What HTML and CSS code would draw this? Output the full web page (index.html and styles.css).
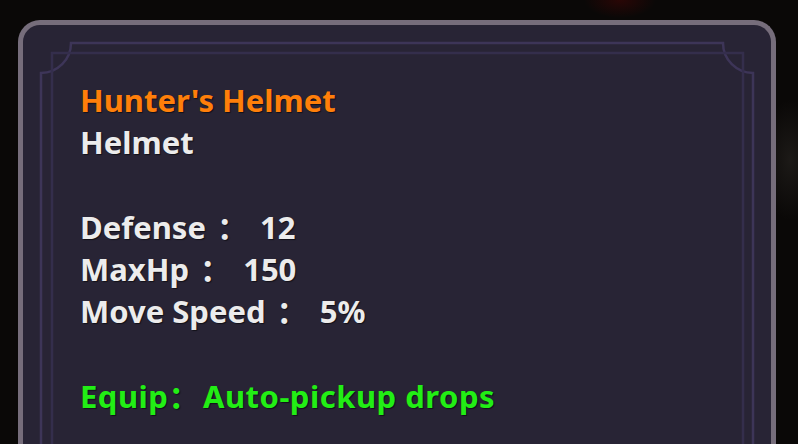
FILE: index.html
```html
<!DOCTYPE html>
<html lang="en">
<head>
    <meta charset="UTF-8">
    <title>Item Tooltip</title>
    <link rel="stylesheet" href="styles.css">
</head>
<body>
    <div class="tooltip">
        <svg class="frame" width="748" height="440" viewBox="0 0 748 440">
            <path class="frame-outer" d="M18 440 V48 A30 30 0 0 0 48 18 H700 A30 30 0 0 0 730 48 V440"/>
            <path class="frame-inner" d="M29 440 V28 H720 V440"/>
        </svg>

        <div class="content">
            <div class="line name">Hunter's Helmet</div>
            <div class="line">Helmet</div>
            <div class="line"></div>
            <div class="line stat">Defense <span class="colon">：</span>&nbsp;12</div>
            <div class="line stat">MaxHp <span class="colon">：</span>&nbsp;150</div>
            <div class="line stat">Move Speed <span class="colon">：</span>&nbsp;5%</div>
            <div class="line"></div>
            <div class="line equip">Equip<span class="colon">：</span>Auto-pickup drops</div>
        </div>
    </div>
</body>
</html>
```

FILE: styles.css
```css
:root {
    --page-bg: #0a0807;
    --card-bg: #282435;
    --card-border: #766d7b;
    --frame-outer: #3d3558;
    --frame-inner: #342e4c;
    --text-color: #ececec;
    --name-color: #ff7f0a;
    --equip-color: #22ee15;
}

html, body {
    margin: 0;
    height: 100%;
    overflow: hidden;
}

body {
    background-color: var(--page-bg);
    background-image:
        radial-gradient(ellipse 36px 18px at 620px 0px, rgba(80, 4, 4, 0.45), transparent),
        radial-gradient(ellipse 30px 60px at 790px 160px, rgba(70, 66, 60, 0.3), transparent);
    font-family: 'Noto Sans', 'Noto Sans CJK SC', sans-serif;
    font-weight: 700;
}

.tooltip {
    position: relative;
    margin: 20px 0 0 18px;
    width: 748px;
    height: 440px;
    background-color: var(--card-bg);
    border: 5px solid var(--card-border);
    border-bottom: none;
    border-radius: 22px 22px 0 0;
}

.frame {
    position: absolute;
    left: 0;
    top: 0;
    fill: none;
}
.frame-outer {
    stroke: var(--frame-outer);
    stroke-width: 2.5;
}
.frame-inner {
    stroke: var(--frame-inner);
    stroke-width: 2.5;
}

.content {
    position: relative;
    padding: 54px 0 0 57px;
    font-size: 31px;
    line-height: 42px;
    color: var(--text-color);
    text-shadow: 1px 1px 1px rgba(0, 0, 0, 0.55);
}

.line {
    height: 42.3px;
    white-space: pre;
}

.name {
    color: var(--name-color);
}
.equip {
    color: var(--equip-color);
    letter-spacing: 0.5px;
}

.colon {
    font-family: 'Noto Sans CJK SC', sans-serif;
    line-height: 1;
}
.stat .colon {
    margin: 0 4px 0 3px;
}
.equip .colon {
    margin-right: 3px;
}
```
